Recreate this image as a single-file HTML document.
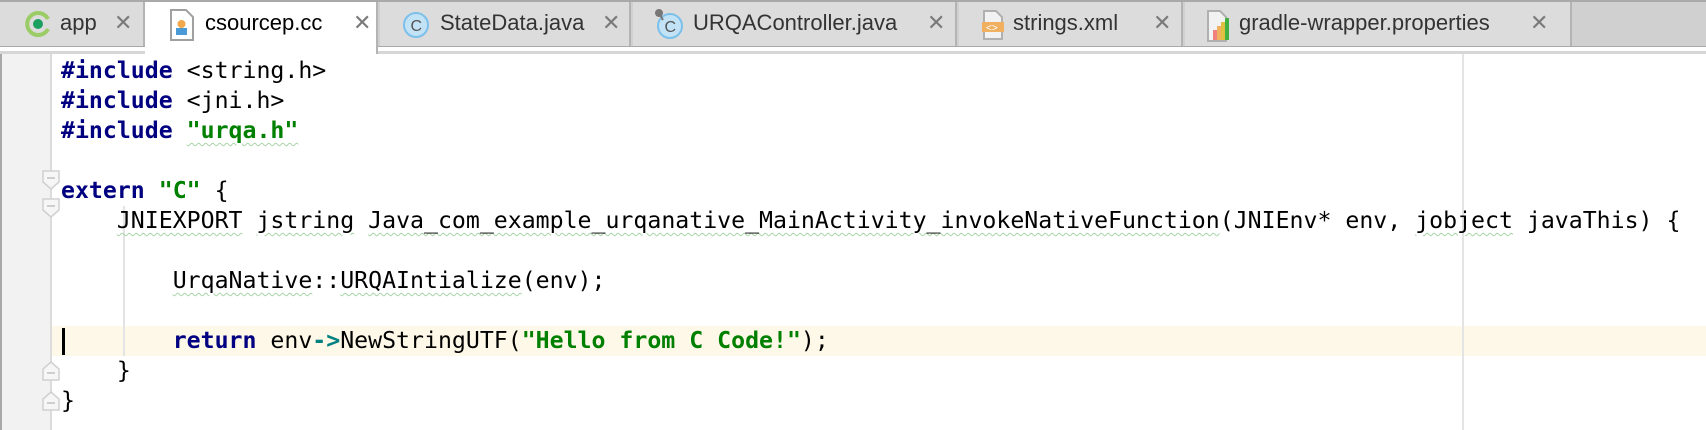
<!DOCTYPE html>
<html><head><meta charset="utf-8"><style>
*{margin:0;padding:0;box-sizing:border-box}
body{width:1706px;height:430px;overflow:hidden;background:#fff;position:relative;font-family:"Liberation Sans",sans-serif}
#bar{position:absolute;left:0;top:0;width:1706px;height:47px;background:#d0d0d0;border-top:2px solid #a9a9a9;border-bottom:1px solid #a9a9a9}
.tab{position:absolute;top:0;height:44px;background:#dcdcdc;border-right:2px solid #b4b4b4;font-size:22px;color:#333;line-height:42px;white-space:nowrap}
.tab .x{position:absolute;top:0;color:#7a7a7a;font-size:22px}
.tab.act{background:#fff;height:52px;color:#000;z-index:2}
.tab svg{position:absolute}
#sep{position:absolute;left:0;top:51px;width:1706px;height:3px;background:#d6d6d6}
#gut{position:absolute;left:0;top:54px;width:50px;height:376px;background:#f2f2f2;border-left:2px solid #a9a9a9}
#gline{position:absolute;left:50px;top:54px;width:2px;height:376px;background:#dcdcdc}
#margin{position:absolute;left:1462px;top:54px;width:2px;height:376px;background:#e4e4e4}
#cur{position:absolute;left:0;top:326px;width:1706px;height:30px;background:#fef8e8}
#code{position:absolute;left:61px;top:56px;font-family:"DejaVu Sans Mono","Liberation Mono",monospace;font-size:23.2px;line-height:30px;white-space:pre;color:#000}
.k{color:#000080;font-weight:bold}
.s{color:#008000;font-weight:bold}
.a{color:#008080;font-weight:bold}
.w{text-decoration:underline wavy #a8d4a8;text-decoration-thickness:1px;text-underline-offset:4px}
.fold{position:absolute;left:42px;width:18px;height:20px}
</style></head><body>
<div id="bar">
<div class="tab" style="left:0;width:145px">
<svg style="left:24px;top:8px" width="28" height="28" viewBox="0 0 28 28"><path d="M24 9 A11 11 0 1 0 24 19" fill="none" stroke="#9ccc65" stroke-width="4"/><circle cx="14" cy="14" r="5" fill="#1aa060"/></svg>
<span style="position:absolute;left:60px">app</span><span class="x" style="left:114px">✕</span></div>
<div class="tab act" style="left:145px;width:233px">
<svg style="left:25px;top:7px" width="24" height="32" viewBox="0 0 24 32"><path d="M1 1H16L23 8V31H1Z" fill="#fff" stroke="#a0a0a0" stroke-width="2"/><rect x="5" y="10" width="13" height="16" fill="#fff"/><circle cx="11.5" cy="15" r="4" fill="#f0a848"/><rect x="6" y="19" width="11" height="7" fill="#4a9ad8"/></svg>
<span style="position:absolute;left:60px">csourcep.cc</span><span class="x" style="left:208px">✕</span></div>
<div class="tab" style="left:380px;width:251px">
<svg style="left:22px;top:9px" width="28" height="28" viewBox="0 0 28 28"><circle cx="14" cy="14" r="12" fill="#c2e2f6" stroke="#7cc0ea" stroke-width="2"/><text x="8.5" y="20" font-size="16" fill="#555" font-family="Liberation Sans">C</text></svg>
<span style="position:absolute;left:60px">StateData.java</span><span class="x" style="left:222px">✕</span></div>
<div class="tab" style="left:633px;width:324px">
<svg style="left:20px;top:6px" width="32" height="32" viewBox="0 0 32 32"><circle cx="17" cy="18" r="12" fill="#c2e2f6" stroke="#7cc0ea" stroke-width="2"/><text x="11.5" y="24" font-size="16" fill="#555" font-family="Liberation Sans">C</text><circle cx="6" cy="5" r="4" fill="#777"/><path d="M6 5L10 12" stroke="#777" stroke-width="2"/></svg>
<span style="position:absolute;left:60px">URQAController.java</span><span class="x" style="left:294px">✕</span></div>
<div class="tab" style="left:959px;width:224px">
<svg style="left:22px;top:8px" width="24" height="30" viewBox="0 0 24 30"><path d="M3 1H15L21 7V29H3Z" fill="#f2f2f2" stroke="#b0b0b0" stroke-width="2"/><rect x="1" y="12" width="22" height="10" fill="#f0b060"/><text x="5" y="21" font-size="10" fill="#fff" font-family="Liberation Sans">&lt;&gt;</text></svg>
<span style="position:absolute;left:54px">strings.xml</span><span class="x" style="left:194px">✕</span></div>
<div class="tab" style="left:1185px;width:387px">
<svg style="left:22px;top:8px" width="24" height="32" viewBox="0 0 24 32"><path d="M1 1H13L19 7V31H1Z" fill="#f2f2f2" stroke="#b0b0b0" stroke-width="2"/><rect x="6" y="20" width="4" height="10" fill="#f08080"/><rect x="10" y="16" width="4" height="14" fill="#f0b060"/><rect x="14" y="12" width="4" height="18" fill="#e0c040"/><rect x="18" y="8" width="4" height="22" fill="#40b040"/></svg>
<span style="position:absolute;left:54px">gradle-wrapper.properties</span><span class="x" style="left:345px">✕</span></div>
</div>
<div id="sep"></div>
<div id="cur"></div>
<div id="gut"></div>
<div id="gline"></div>
<div id="margin"></div>
<div style="position:absolute;left:123px;top:206px;width:2px;height:150px;background:#e4e4e4"></div>
<div style="position:absolute;left:62px;top:328px;width:3px;height:27px;background:#000"></div>
<svg class="fold" style="top:170px" viewBox="0 0 18 20"><path d="M1 1H17V12L9 19L1 12Z" fill="#f6f6f6" stroke="#d0d0d0" stroke-width="1.5"/><path d="M5 8H13" stroke="#c0c0c0" stroke-width="1.5"/></svg>
<svg class="fold" style="top:198px" viewBox="0 0 18 20"><path d="M1 1H17V12L9 19L1 12Z" fill="#f6f6f6" stroke="#d0d0d0" stroke-width="1.5"/><path d="M5 8H13" stroke="#c0c0c0" stroke-width="1.5"/></svg>
<svg class="fold" style="top:361px" viewBox="0 0 18 20"><path d="M1 19H17V8L9 1L1 8Z" fill="#f6f6f6" stroke="#d0d0d0" stroke-width="1.5"/><path d="M5 12H13" stroke="#c0c0c0" stroke-width="1.5"/></svg>
<svg class="fold" style="top:391px" viewBox="0 0 18 20"><path d="M1 19H17V8L9 1L1 8Z" fill="#f6f6f6" stroke="#d0d0d0" stroke-width="1.5"/><path d="M5 12H13" stroke="#c0c0c0" stroke-width="1.5"/></svg>
<div id="code"><span class="k">#include</span> &lt;string.h&gt;
<span class="k">#include</span> &lt;jni.h&gt;
<span class="k">#include</span> <span class="s w">"urqa.h"</span>

<span class="k">extern</span> <span class="s">"C"</span> {
    <span class="w">JNIEXPORT</span> <span class="w">jstring</span> <span class="w">Java_com_example_urqanative_MainActivity_invokeNativeFunction</span>(JNIEnv* env, <span class="w">jobject</span> javaThis) {

        <span class="w">UrqaNative</span>::<span class="w">URQAIntialize</span>(env);

        <span class="k">return</span> env<span class="a">-&gt;</span>NewStringUTF(<span class="s">"Hello from C Code!"</span>);
    }
}</div>
</body></html>
